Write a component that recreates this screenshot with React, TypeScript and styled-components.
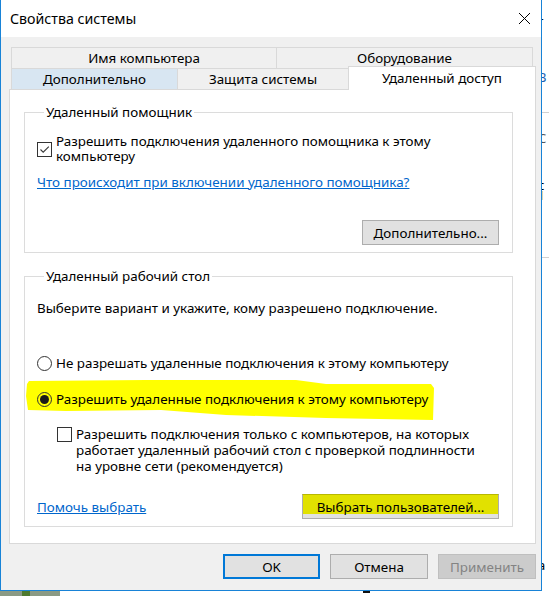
import React from 'react';
import styled, { createGlobalStyle } from 'styled-components';

const GlobalStyle = createGlobalStyle`
  * { box-sizing: border-box; }
  html, body { margin: 0; padding: 0; background: #fff; overflow: hidden; }
  body {
    font-family: "Noto Sans", "DejaVu Sans", sans-serif;
    font-size: 13.4px;
    color: #000;
  }
`

const Screen = styled.div`
  display: grid;
  grid-template-columns: 542px 7px;
  grid-template-rows: 591px 5px;
  width: 549px;
  height: 596px;
  overflow: hidden;
`

const Window = styled.div`
  display: flex;
  flex-direction: column;
  border: 1px solid #1883d7;
  border-top: none;
  background: #f0f0f0;
`

const TitleBar = styled.div`
  display: flex;
  align-items: center;
  justify-content: space-between;
  height: 37px;
  padding: 0 10px 0 9px;
  background: #fff;
`

const Title = styled.span`
  font-size: 14.2px;
`

const Body = styled.div`
  flex: 1;
  display: flex;
  flex-direction: column;
  padding: 10px 5px 0 8px;
`

const TabStrip = styled.div`
  margin: 0 2px;
`

const TabRow = styled.div`
  display: flex;
  height: 22px;
  & + & {
    margin-top: -1px;
  }
`

const Tab = styled.div<{ $w: number; $hover?: boolean; $active?: boolean }>`
  flex: 0 0 ${p => p.$w}px;
  height: 22px;
  border: 1px solid #d9d9d9;
  background: ${p => (p.$hover ? '#d8e6f2' : '#f0f0f0')};
  text-align: center;
  line-height: 20px;
  white-space: nowrap;
  & + & {
    margin-left: -1px;
  }
  ${p =>
    p.$active &&
    `
    position: relative;
    flex-basis: ${p.$w + 4}px;
    height: 24px;
    margin: -2px -2px 0 -3px;
    background: #fff;
    border-bottom: none;
    line-height: 22px;
  `}
`

const Panel = styled.div`
  margin-top: -1px;
  padding: 14px 22px 16px 14px;
  background: #fff;
  border: 1px solid #d9d9d9;
`

const Group = styled.fieldset<{ $gap?: number }>`
  margin: ${p => p.$gap ?? 0}px 0 0;
  padding: 0 13px 7px 12px;
  min-width: 0;
  border: 1px solid #dcdcdc;
`

const Legend = styled.legend`
  margin-left: 7px;
  padding: 0 2px;
  line-height: 16px;
`

const Text = styled.div<{ $mt?: number }>`
  margin-top: ${p => p.$mt ?? 0}px;
  line-height: 16px;
  white-space: nowrap;
`

const CheckRow = styled.label<{ $mt: number; $indent?: number; $top?: boolean; $lh?: number }>`
  position: relative;
  display: flex;
  align-items: ${p => (p.$top ? 'flex-start' : 'center')};
  gap: 4px;
  margin-top: ${p => p.$mt}px;
  margin-left: ${p => p.$indent ?? 0}px;
  line-height: ${p => p.$lh ?? 16}px;
  white-space: nowrap;
`

const RowText = styled.span`
  position: relative;
`

const Box = styled.span<{ $top?: boolean }>`
  position: relative;
  flex: 0 0 15px;
  width: 15px;
  height: 15px;
  margin-top: ${p => (p.$top ? 1 : 0)}px;
  border: 1px solid #333;
  background: #fff;
  display: flex;
  align-items: center;
  justify-content: center;
`

const Radio = styled.span<{ $on?: boolean }>`
  position: relative;
  flex: 0 0 15px;
  width: 15px;
  height: 15px;
  border: 1px solid #333;
  border-radius: 50%;
  display: flex;
  align-items: center;
  justify-content: center;
  &::after {
    content: '';
    display: ${p => (p.$on ? 'block' : 'none')};
    width: 9px;
    height: 9px;
    border-radius: 50%;
    background: #1a1a1a;
  }
`

const Highlight = styled.svg`
  position: absolute;
  left: -11px;
  top: -11px;
  width: 408px;
  height: 42px;
`

const Link = styled.a<{ $mt?: number }>`
  display: inline-block;
  margin-top: ${p => p.$mt ?? 0}px;
  line-height: 16px;
  color: #0066cc;
  text-decoration: underline;
  white-space: nowrap;
  cursor: pointer;
`

const ActionRow = styled.div<{ $mt: number; $split?: boolean }>`
  display: flex;
  align-items: center;
  justify-content: ${p => (p.$split ? 'space-between' : 'flex-end')};
  margin-top: ${p => p.$mt}px;
`

const Button = styled.button<{ $w: number; $marked?: boolean; $primary?: boolean }>`
  width: ${p => p.$w}px;
  height: 25px;
  padding: 0;
  font: inherit;
  color: #000;
  border: 1px solid #adadad;
  background: #e1e1e1;
  white-space: nowrap;
  ${p =>
    p.$marked &&
    `
    border-top-color: #b8b800;
    background: linear-gradient(#e1e100 0 82%, #e1e1e1 82%);
  `}
  ${p =>
    p.$primary &&
    `
    border: 2px solid #0078d7;
  `}
  &:disabled {
    color: #838383;
    background: #cccccc;
    border-color: #bfbfbf;
  }
`

const Footer = styled.div`
  display: flex;
  justify-content: flex-end;
  gap: 10px;
  margin-top: 10px;
`

const SideStrip = styled.div`
  display: flex;
  flex-direction: column;
  overflow: hidden;
  background: #fff;
  font-size: 13px;
  line-height: 10px;
`

const Frag = styled.span<{ $h: number; $color?: string }>`
  flex: 0 0 ${p => p.$h}px;
  color: ${p => p.$color ?? '#000'};
  white-space: nowrap;
  margin-left: -4px;
  overflow: hidden;
`

const Rule = styled.div<{ $h?: number; $blank?: boolean }>`
  flex: 0 0 ${p => p.$h ?? 1}px;
  background: ${p => (p.$blank ? 'transparent' : '#d0d0d0')};
`

const BottomStrip = styled.div`
  grid-column: 1 / 3;
  display: flex;
  background: #fff;
`

const Grass = styled.div`
  flex: 0 0 60px;
  display: flex;
  justify-content: center;
  background: #8b9a84;
  & > span {
    width: 8px;
    margin-right: 8px;
    background: #4f7a2f;
  }
`

const Glyph = styled.div`
  width: 7px;
  margin-left: 303px;
  border-top: 2px solid #111;
`

const Check = () => (
  <svg width="13" height="13" viewBox="0 0 13 13">
    <path d="M2.5 6.5 L5.2 9.2 L10.8 3.6" fill="none" stroke="#3a3a3a" strokeWidth="1.1" />
  </svg>
)

const CloseIcon = () => (
  <svg width="13" height="13" viewBox="0 0 13 13">
    <path d="M1 1 L12 12 M12 1 L1 12" stroke="#000" strokeWidth="1" />
  </svg>
)

const App = () => {
  return (
    <>
      <GlobalStyle />
      <Screen>
        <Window>
          <TitleBar>
            <Title>Свойства системы</Title>
            <CloseIcon />
          </TitleBar>
          <Body>
            <TabStrip>
              <TabRow>
                <Tab $w={266}>Имя компьютера</Tab>
                <Tab $w={257}>Оборудование</Tab>
              </TabRow>
              <TabRow>
                <Tab $w={167} $hover>Дополнительно</Tab>
                <Tab $w={172}>Защита системы</Tab>
                <Tab $w={184} $active>Удаленный доступ</Tab>
              </TabRow>
            </TabStrip>
            <Panel>
              <Group>
                <Legend>Удаленный помощник</Legend>
                <CheckRow $mt={14} $lh={15}>
                  <Box><Check /></Box>
                  <RowText>Разрешить подключения удаленного помощника к этому<br />компьютеру</RowText>
                </CheckRow>
                <Link $mt={10}>Что происходит при включении удаленного помощника?</Link>
                <ActionRow $mt={29}>
                  <Button $w={137}>Дополнительно...</Button>
                </ActionRow>
              </Group>
              <Group $gap={15}>
                <Legend>Удаленный рабочий стол</Legend>
                <Text $mt={16}>Выберите вариант и укажите, кому разрешено подключение.</Text>
                <CheckRow $mt={39}>
                  <Radio />
                  <RowText>Не разрешать удаленные подключения к этому компьютеру</RowText>
                </CheckRow>
                <CheckRow $mt={20}>
                  <Highlight viewBox="0 0 408 42" preserveAspectRatio="none">
                    <path
                      d="M3 1 L120 0 L270 0 L300 4 L405 4 L408 8 L407 40 L300 38 L200 35 L135 30 L40 31 L2 30 L0 16 L1 4 Z"
                      fill="#ffff00"
                    />
                  </Highlight>
                  <Radio $on />
                  <RowText>Разрешить удаленные подключения к этому компьютеру</RowText>
                </CheckRow>
                <CheckRow $mt={19} $indent={20} $top>
                  <Box $top />
                  <RowText>
                    Разрешить подключения только с компьютеров, на которых<br />
                    работает удаленный рабочий стол с проверкой подлинности<br />
                    на уровне сети (рекомендуется)
                  </RowText>
                </CheckRow>
                <ActionRow $mt={20} $split>
                  <Link>Помочь выбрать</Link>
                  <Button $w={197} $marked>Выбрать пользователей...</Button>
                </ActionRow>
              </Group>
            </Panel>
            <Footer>
              <Button $w={97} $primary>OK</Button>
              <Button $w={98}>Отмена</Button>
              <Button $w={98} disabled>Применить</Button>
            </Footer>
          </Body>
        </Window>
        <SideStrip>
          <Rule $h={16} $blank />
          <Frag $h={56}>r</Frag>
          <Frag $h={40} $color="#1a5fb4">В</Frag>
          <Rule />
          <Rule $h={20} $blank />
          <Frag $h={47} $color="#555">С</Frag>
          <Frag $h={10}>с</Frag>
          <Frag $h={67} $color="#d6c000">1</Frag>
          <Rule />
          <Rule $h={302} $blank />
          <Frag $h={10}>а</Frag>
        </SideStrip>
        <BottomStrip>
          <Grass><span /></Grass>
          <Glyph />
        </BottomStrip>
      </Screen>
    </>
  )
}

export default App;
